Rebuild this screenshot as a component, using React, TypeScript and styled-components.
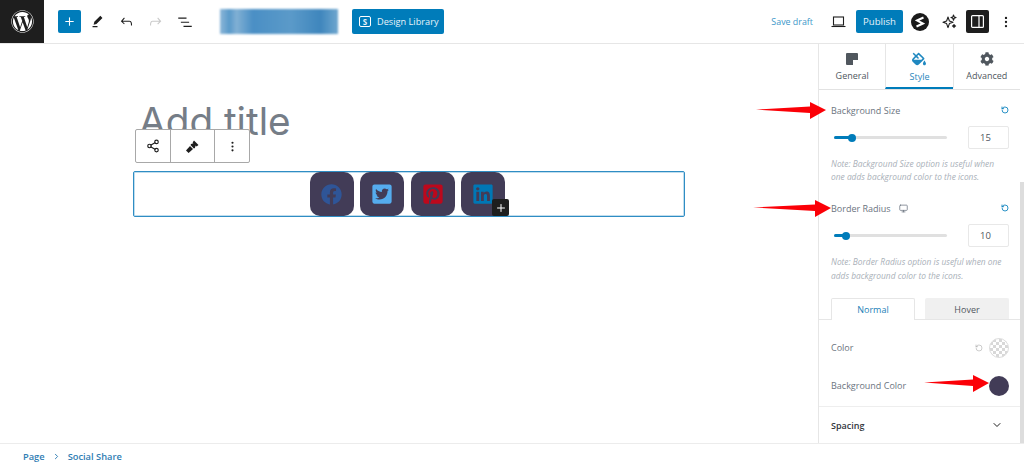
import React from "react";
import styled, { createGlobalStyle } from "styled-components";
import {
  FaCog,
  FaFacebook,
  FaFillDrip,
  FaLinkedin,
  FaPinterestSquare,
  FaTwitterSquare,
  FaWordpress,
} from "react-icons/fa";
import {
  ChevronDown,
  ChevronRight,
  Monitor,
  MoreVertical,
  Plus,
  RotateCcw,
  Share2,
} from "lucide-react";

const BLUE = "#007cba";

const GlobalStyle = createGlobalStyle`
  html, body {
    margin: 0;
    padding: 0;
    background: #fff;
    overflow: hidden;
  }
  * { box-sizing: border-box; }
`;

const Page = styled.div`
  position: relative;
  display: flex;
  flex-direction: column;
  width: 1024px;
  height: 468px;
  font-family: "Open Sans", "Noto Sans", sans-serif;
  color: #50575e;
  overflow: hidden;
`;

const Header = styled.header`
  display: flex;
  align-items: center;
  flex: 0 0 44px;
  border-bottom: 1px solid #e6e6e6;
`;

const Logo = styled.div`
  display: flex;
  align-items: center;
  justify-content: center;
  width: 44px;
  height: 43px;
  background: #1e1e1e;
  color: #fff;
  font-size: 23px;
`;

const AddButton = styled.button`
  display: flex;
  align-items: center;
  justify-content: center;
  width: 23px;
  height: 23px;
  margin: 0 2px 0 14px;
  padding: 0;
  border: 0;
  border-radius: 2px;
  background: ${BLUE};
  color: #fff;
`;

const ToolIcon = styled.span<{ $width?: number; $muted?: boolean }>`
  display: flex;
  align-items: center;
  justify-content: center;
  width: ${(p) => p.$width ?? 29}px;
  color: ${(p) => (p.$muted ? "#c9c9c9" : "#1e1e1e")};
`;

const BlurredTitle = styled.div`
  width: 118px;
  height: 25px;
  margin-left: 21px;
  background: linear-gradient(90deg, #8db7d8 0%, #5a9aca 8%, #81b0d4 14%, #4a8fc5 28%, #5b9ac9 60%, #3f86bd 85%, #6fa7cf 100%);
  filter: blur(0.8px);
`;

const LibraryButton = styled.button`
  display: flex;
  align-items: center;
  gap: 6px;
  width: 92px;
  height: 25px;
  margin-left: 14px;
  padding: 0 0 0 7px;
  border: 0;
  border-radius: 2px;
  background: ${BLUE};
  color: #e8f3f9;
  font: 9.2px "Open Sans", sans-serif;
  white-space: nowrap;
`;

const LibraryGlyph = styled.span`
  display: flex;
  align-items: center;
  justify-content: center;
  width: 12px;
  height: 11px;
  border: 1px solid #fff;
  border-radius: 2px;
  font-size: 8px;
  font-weight: 700;
`;

const HeaderRight = styled.div`
  display: flex;
  align-items: center;
  margin-left: auto;
  padding-right: 1px;
`;

const SaveDraft = styled.span`
  margin-right: 18px;
  color: #3d97c9;
  font-size: 8.9px;
  white-space: nowrap;
`;

const PublishButton = styled.button`
  width: 47px;
  height: 23px;
  margin: 0 8px 0 10px;
  padding: 0;
  border: 0;
  border-radius: 2px;
  background: ${BLUE};
  color: #e8f3f9;
  font: 9.6px "Open Sans", sans-serif;
`;

const BrandBadge = styled.span`
  display: flex;
  align-items: center;
  justify-content: center;
  width: 18px;
  height: 18px;
  margin-right: 13px;
  border-radius: 50%;
  background: #1a1a1a;
`;

const SidebarToggle = styled.span`
  display: flex;
  align-items: center;
  justify-content: center;
  width: 23px;
  height: 23px;
  margin-left: 9px;
  border-radius: 2px;
  background: #1e1e1e;
`;

const Body = styled.div`
  display: flex;
  flex: 1;
  min-height: 0;
`;

const Canvas = styled.main`
  position: relative;
  flex: 1;
  padding: 52px 0 0 133px;
`;

const PostTitle = styled.h1`
  margin: 0 0 0 6px;
  color: #757d87;
  font: 400 38.7px/50px Inter, sans-serif;
`;

const BlockToolbar = styled.div`
  position: absolute;
  top: 85px;
  left: 135px;
  display: flex;
  height: 34px;
  border: 1px solid #a8a8a8;
  border-radius: 2px;
  background: #fff;
`;

const BlockTool = styled.span<{ $width: number }>`
  display: flex;
  align-items: center;
  justify-content: center;
  width: ${(p) => p.$width}px;
  color: #1e1e1e;
  border-left: 1px solid #a8a8a8;
  &:first-child {
    border-left: 0;
  }
`;

const SocialBlock = styled.div`
  display: flex;
  justify-content: center;
  gap: 6.5px;
  width: 552px;
  height: 46px;
  margin-top: 25px;
  padding-right: 3px;
  border: 1px solid #2f8dc4;
  border-radius: 2px;
  box-shadow: inset 0 0 0 1px rgba(47, 141, 196, 0.3);
`;

const SocialTile = styled.span<{ $color: string }>`
  position: relative;
  display: flex;
  align-items: center;
  justify-content: center;
  width: 44px;
  height: 44px;
  border-radius: 10px;
  background: #423c57;
  color: ${(p) => p.$color};
`;

const AddBadge = styled.span`
  position: absolute;
  right: -4px;
  bottom: 0;
  display: flex;
  align-items: center;
  justify-content: center;
  width: 17px;
  height: 17px;
  border-radius: 2px;
  background: #1e1e1e;
  color: #fff;
`;

const Sidebar = styled.aside`
  display: flex;
  flex-direction: column;
  width: 202px;
  border-left: 1px solid #e6e6e6;
`;

const Tabs = styled.div`
  display: flex;
  flex: 0 0 46px;
  border-bottom: 1px solid #e2e2e2;
`;

const Tab = styled.div<{ $active?: boolean }>`
  display: flex;
  flex: 1;
  flex-direction: column;
  align-items: center;
  gap: ${(p) => (p.$active ? 4 : 3)}px;
  padding-top: 8px;
  border-left: 1px solid #e6e6e6;
  border-bottom: 2px solid ${(p) => (p.$active ? BLUE : "transparent")};
  color: ${(p) => (p.$active ? "#2a86bb" : "#50575e")};
  font-size: 9px;
  line-height: 13px;
  &:first-child {
    border-left: 0;
  }
`;

const Settings = styled.div`
  flex: 1;
  padding: 13px 11px 0 12px;
`;

const LabelRow = styled.div<{ $top?: number }>`
  display: flex;
  align-items: center;
  gap: 8px;
  height: 14px;
  margin-top: ${(p) => p.$top ?? 0}px;
  color: #6b7480;
  font-size: 9px;
`;

const ResetIcon = styled.span`
  display: flex;
  margin-left: auto;
  color: ${BLUE};
`;

const SliderRow = styled.div`
  display: flex;
  align-items: center;
  justify-content: space-between;
  height: 23px;
  margin-top: 9px;
  padding-left: 3px;
`;

const SliderTrack = styled.div`
  position: relative;
  width: 113px;
  height: 3px;
  border-radius: 2px;
  background: #e0e0e0;
`;

const SliderFill = styled.div`
  position: relative;
  height: 3px;
  border-radius: 2px;
  background: ${BLUE};
`;

const SliderThumb = styled.span`
  position: absolute;
  top: -2.5px;
  right: -4px;
  width: 8px;
  height: 8px;
  border-radius: 50%;
  background: ${BLUE};
`;

const NumberBox = styled.div`
  width: 41px;
  height: 23px;
  padding-left: 11px;
  border: 1px solid #e8e8e8;
  border-radius: 2px;
  color: #50575e;
  font-size: 9.5px;
  line-height: 21px;
`;

const Note = styled.p`
  margin: 8px 0 0;
  color: #a9b0b8;
  font-size: 8.4px;
  font-style: italic;
  line-height: 13.2px;
  white-space: nowrap;
`;

const ToggleRow = styled.div`
  display: flex;
  gap: 10px;
  height: 22px;
  margin: 16px -11px 0 -12px;
  padding: 0 11px 0 12px;
  border-bottom: 1px solid #e6e6e6;
`;

const ToggleTab = styled.div<{ $active?: boolean }>`
  width: 84px;
  height: ${(p) => (p.$active ? 22 : 21)}px;
  border: 1px solid ${(p) => (p.$active ? "#e6e6e6" : "#f0f0f0")};
  border-bottom: 0;
  border-radius: 2px 2px 0 0;
  background: ${(p) => (p.$active ? "#fff" : "#f0f0f0")};
  color: ${(p) => (p.$active ? "#1b7fb8" : "#50575e")};
  font-size: 9px;
  line-height: 22px;
  text-align: center;
`;

const ColorRow = styled.div<{ $top: number }>`
  display: flex;
  align-items: center;
  height: 20px;
  margin-top: ${(p) => p.$top}px;
  color: #6b7480;
  font-size: 9px;
`;

const ColorReset = styled.span`
  display: flex;
  margin: 0 6px 0 auto;
  color: #9a9a9a;
`;

const CheckerSwatch = styled.span`
  width: 20px;
  height: 20px;
  border: 1px solid #ddd;
  border-radius: 50%;
  background: repeating-conic-gradient(#d8d8d8 0 25%, #fff 0 50%) 0 0 / 6px 6px;
`;

const ColorSwatch = styled.span<{ $color: string }>`
  width: 20px;
  height: 20px;
  margin-left: auto;
  border-radius: 50%;
  background: ${(p) => p.$color};
`;

const SpacingPanel = styled.div`
  display: flex;
  align-items: center;
  justify-content: space-between;
  flex: 0 0 37px;
  padding: 0 17px 0 12px;
  border-top: 1px solid #eeeeee;
  color: #33373d;
  font-size: 9px;
  font-weight: 600;
`;

const ScrollRail = styled.div`
  display: flex;
  flex: 0 0 4px;
  padding-top: 138px;
`;

const ScrollThumb = styled.div`
  flex: 1;
  background: #dddddd;
`;

const Footer = styled.footer`
  display: flex;
  align-items: center;
  gap: 7px;
  flex: 0 0 25px;
  padding-left: 23px;
  border-top: 1px solid #ececec;
  color: #2f7db3;
  font-size: 9.3px;
  font-weight: 600;
`;

const Arrow = styled.svg<{ $left: number; $top: number }>`
  position: absolute;
  top: ${(p) => p.$top}px;
  left: ${(p) => p.$left}px;
`;

const RedArrow: React.FC<{ left: number; top: number; length: number }> = ({
  left,
  top,
  length,
}) => (
  <Arrow $left={left} $top={top} width={length} height={17} viewBox={`0 0 ${length} 17`}>
    <polygon
      fill="#fb0007"
      points={`0,7.5 ${length - 16},4.5 ${length - 16},0 ${length},8 ${length - 16},17 ${length - 16},11 `}
    />
  </Arrow>
);

const slots = [
  { id: "fb", color: "#2f5597", icon: <FaFacebook size={21} /> },
  { id: "tw", color: "#55acee", icon: <FaTwitterSquare size={22} /> },
  { id: "pin", color: "#bd081c", icon: <FaPinterestSquare size={22} /> },
  { id: "in", color: "#0077b5", icon: <FaLinkedin size={22} /> },
];

export default function App() {
  return (
    <Page>
      <GlobalStyle />
      <Header>
        <Logo>
          <FaWordpress />
        </Logo>
        <AddButton>
          <Plus size={13} strokeWidth={2} />
        </AddButton>
        <ToolIcon>
          <svg width="17" height="17" viewBox="0 0 24 24" fill="currentColor">
            <path d="m19 7-3-3-8.5 8.5-1 4 4-1L19 7Zm-7 11.5H5V20h7v-1.5Z" />
          </svg>
        </ToolIcon>
        <ToolIcon>
          <svg width="17" height="17" viewBox="0 0 24 24" fill="currentColor">
            <path d="M18.3 11.7c-.6-.6-1.4-.9-2.3-.9H6.7l2.9-3.3-1.1-1-4.5 5L8.5 16l1-1-2.7-2.7H16c.5 0 .9.2 1.3.5 1 1 1 3.4 1 4.5v.3h1.5v-.2c0-1.5 0-4.3-1.5-5.7z" />
          </svg>
        </ToolIcon>
        <ToolIcon $muted>
          <svg width="17" height="17" viewBox="0 0 24 24" fill="currentColor">
            <path d="M15.6 6.5l-1.1 1 2.9 3.3H8c-.9 0-1.7.3-2.3.9-1.4 1.5-1.4 4.2-1.4 5.6v.2h1.5v-.3c0-1.1 0-3.5 1-4.5.3-.3.7-.5 1.3-.5h9.2L14.5 15l1.1 1.1 4.6-4.6-4.6-5z" />
          </svg>
        </ToolIcon>
        <ToolIcon>
          <svg width="18" height="18" viewBox="0 0 24 24" fill="currentColor">
            <path d="M3 6h11v1.5H3V6zm3.5 5.5h11V13h-11v-1.5zM21 17H10v1.5h11V17z" />
          </svg>
        </ToolIcon>
        <BlurredTitle />
        <LibraryButton>
          <LibraryGlyph>S</LibraryGlyph>
          Design Library
        </LibraryButton>
        <HeaderRight>
          <SaveDraft>Save draft</SaveDraft>
          <ToolIcon $width={15}>
            <svg width="15" height="12" viewBox="0 0 15 12" fill="none" stroke="currentColor" strokeWidth="1.1">
              <rect x="2.5" y="1" width="10" height="8" />
              <path d="M0.5 10.5h14" />
            </svg>
          </ToolIcon>
          <PublishButton>Publish</PublishButton>
          <BrandBadge>
            <svg width="10" height="12" viewBox="0 0 10 12" fill="none" stroke="#fff" strokeWidth="2">
              <path d="M8.5 1.5 2 4.5 8 7.5 1.5 10.5" />
            </svg>
          </BrandBadge>
          <ToolIcon $width={15}>
            <svg width="15" height="15" viewBox="0 0 15 15" fill="none" stroke="currentColor" strokeWidth="1.1" strokeLinejoin="round">
              <path d="M6 3 7.4 7 11 8.3 7.4 9.6 6 13.6 4.6 9.6 1 8.3 4.6 7Z" />
              <path d="M11.5 1 12.2 2.9 14 3.6 12.2 4.3 11.5 6.2 10.8 4.3 9 3.6 10.8 2.9Z" />
              <path d="M12 10.5 12.5 11.6 13.6 12 12.5 12.5 12 13.6 11.5 12.5 10.4 12 11.5 11.6Z" />
            </svg>
          </ToolIcon>
          <SidebarToggle>
            <svg width="13" height="13" viewBox="0 0 13 13" fill="none" stroke="#fff" strokeWidth="1.2">
              <rect x="0.6" y="0.6" width="11.8" height="11.8" rx="1" />
              <path d="M8 0.6v11.8" />
            </svg>
          </SidebarToggle>
          <ToolIcon $width={34}>
            <MoreVertical size={14} />
          </ToolIcon>
        </HeaderRight>
      </Header>

      <Body>
        <Canvas>
          <PostTitle>Add title</PostTitle>
          <BlockToolbar>
            <BlockTool $width={34}>
              <Share2 size={14} />
            </BlockTool>
            <BlockTool $width={44}>
              <svg width="15" height="15" viewBox="0 0 15 15" fill="currentColor">
                <path d="M9 1.5 13.5 6 11.6 7.4 10.7 6.6 9.9 8.9 8.9 9.5 5.5 6.1 6.1 5.1 8.4 4.3 7.6 3.4Z" />
                <path d="M5 7 8 10 3.6 14 1 11.4Z" />
              </svg>
            </BlockTool>
            <BlockTool $width={35}>
              <MoreVertical size={13} />
            </BlockTool>
          </BlockToolbar>
          <SocialBlock>
            {slots.map((s) => (
              <SocialTile key={s.id} $color={s.color}>
                {s.icon}
                {s.id === "in" && (
                  <AddBadge>
                    <Plus size={12} strokeWidth={2} />
                  </AddBadge>
                )}
              </SocialTile>
            ))}
          </SocialBlock>
        </Canvas>

        <Sidebar>
          <Tabs>
            <Tab>
              <svg width="14" height="14" viewBox="0 0 14 14">
                <rect width="12" height="12" x="1" y="1" rx="1" fill="#50575e" />
                <rect width="5" height="5" x="8" y="8" fill="#fff" />
              </svg>
              General
            </Tab>
            <Tab $active>
              <FaFillDrip size={14} color="#1f88c0" />
              Style
            </Tab>
            <Tab>
              <FaCog size={14} color="#50575e" />
              Advanced
            </Tab>
          </Tabs>
          <Settings>
            <LabelRow>
              Background Size
              <ResetIcon>
                <RotateCcw size={8} strokeWidth={2.5} />
              </ResetIcon>
            </LabelRow>
            <SliderRow>
              <SliderTrack>
                <SliderFill style={{ width: "16%" }}>
                  <SliderThumb />
                </SliderFill>
              </SliderTrack>
              <NumberBox>15</NumberBox>
            </SliderRow>
            <Note>
              Note: Background Size option is useful when
              <br />
              one adds background color to the icons.
            </Note>
            <LabelRow $top={18}>
              Border Radius
              <Monitor size={9} strokeWidth={2} />
              <ResetIcon>
                <RotateCcw size={8} strokeWidth={2.5} />
              </ResetIcon>
            </LabelRow>
            <SliderRow>
              <SliderTrack>
                <SliderFill style={{ width: "11%" }}>
                  <SliderThumb />
                </SliderFill>
              </SliderTrack>
              <NumberBox>10</NumberBox>
            </SliderRow>
            <Note>
              Note: Border Radius option is useful when one
              <br />
              adds background color to the icons.
            </Note>
            <ToggleRow>
              <ToggleTab $active>Normal</ToggleTab>
              <ToggleTab>Hover</ToggleTab>
            </ToggleRow>
            <ColorRow $top={18}>
              Color
              <ColorReset>
                <RotateCcw size={8} strokeWidth={1.5} />
              </ColorReset>
              <CheckerSwatch />
            </ColorRow>
            <ColorRow $top={18}>
              Background Color
              <ColorSwatch $color="#423c57" />
            </ColorRow>
          </Settings>
          <SpacingPanel>
            Spacing
            <ChevronDown size={12} color="#1e1e1e" strokeWidth={2} />
          </SpacingPanel>
        </Sidebar>
        <ScrollRail>
          <ScrollThumb />
        </ScrollRail>
      </Body>

      <Footer>
        Page
        <ChevronRight size={9} strokeWidth={2.5} />
        Social Share
      </Footer>

      <RedArrow left={756} top={102} length={70} />
      <RedArrow left={753} top={200} length={78} />
      <RedArrow left={924} top={375} length={65} />
    </Page>
  );
}
